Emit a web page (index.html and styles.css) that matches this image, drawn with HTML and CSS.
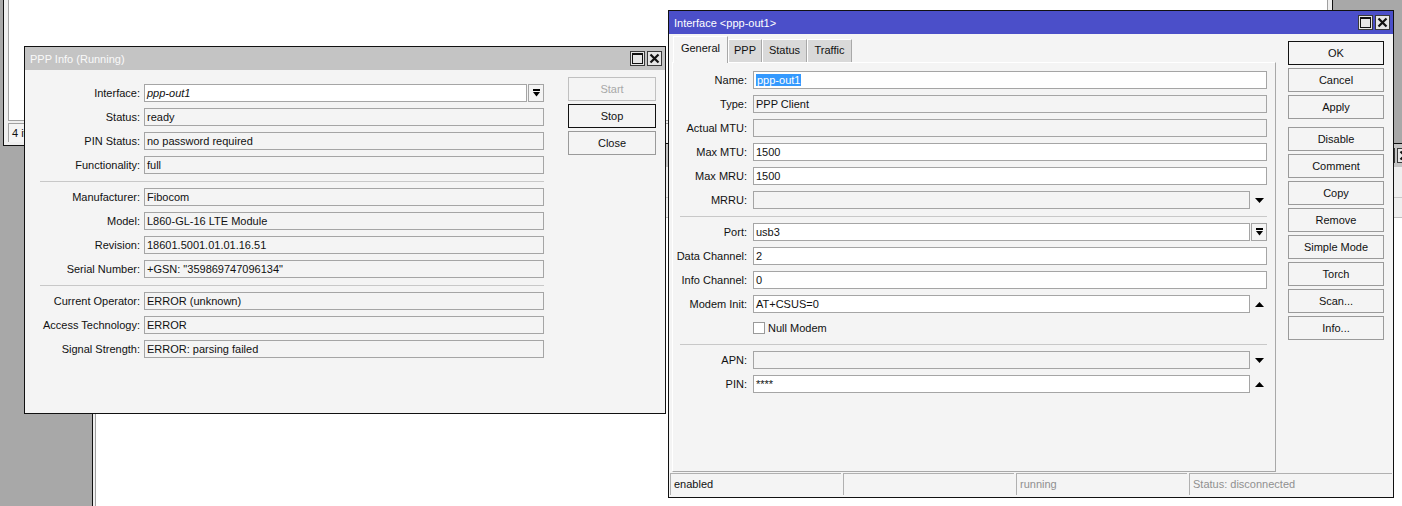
FILE: index.html
```html
<!DOCTYPE html>
<html lang="en">
<head>
  <title>PPP Info - Interface &lt;ppp-out1&gt;</title>
  <meta charset="utf-8">
  <link rel="stylesheet" href="styles.css">
</head>
<body>
  <div id="desktop">

    <!-- windows lying behind -->
    <div class="bgwin" id="bg-top">
      <div class="bglist"></div>
      <div class="bgstatus">4 items</div>
    </div>

    <div class="bgwin" id="bg-low">
      <div class="titlebar">
        <span class="title"></span>
        <span class="tbtn"><svg width="11" height="11" viewBox="0 0 11 11"><rect x="0.5" y="0.5" width="10" height="10" fill="none" stroke="#111"/><rect x="0" y="0" width="11" height="2" fill="#111"/></svg></span>
        <span class="tbtn"><svg width="11" height="11" viewBox="0 0 11 11"><path d="M1.5 1.5 L9.5 9.5 M9.5 1.5 L1.5 9.5" stroke="#111" stroke-width="2.2"/></svg></span>
      </div>
      <div class="bgtools"></div>
      <div class="bghead"></div>
      <div class="bglist"></div>
    </div>

    <!-- PPP Info -->
    <div class="win" id="ppp-info">
      <div class="titlebar">
        <span class="title">PPP Info (Running)</span>
        <span class="tbtn"><svg width="11" height="11" viewBox="0 0 11 11"><rect x="0.5" y="0.5" width="10" height="10" fill="none" stroke="#111"/><rect x="0" y="0" width="11" height="2" fill="#111"/></svg></span>
        <span class="tbtn"><svg width="11" height="11" viewBox="0 0 11 11"><path d="M1.5 1.5 L9.5 9.5 M9.5 1.5 L1.5 9.5" stroke="#111" stroke-width="2.2"/></svg></span>
      </div>
      <div class="body">
        <div class="form">
          <div class="row">
            <span class="lbl">Interface:</span>
            <span class="fld edit"><i>ppp-out1</i></span>
            <span class="dropbtn"><svg width="7" height="8" viewBox="0 0 7 8"><rect x="0" y="0" width="7" height="2" fill="#000"/><polygon points="0,3 7,3 3.5,7.5" fill="#000"/></svg></span>
          </div>
          <div class="row"><span class="lbl">Status:</span><span class="fld">ready</span></div>
          <div class="row"><span class="lbl">PIN Status:</span><span class="fld">no password required</span></div>
          <div class="row"><span class="lbl">Functionality:</span><span class="fld">full</span></div>
          <div class="sep"></div>
          <div class="row"><span class="lbl">Manufacturer:</span><span class="fld">Fibocom</span></div>
          <div class="row"><span class="lbl">Model:</span><span class="fld">L860-GL-16 LTE Module</span></div>
          <div class="row"><span class="lbl">Revision:</span><span class="fld">18601.5001.01.01.16.51</span></div>
          <div class="row"><span class="lbl">Serial Number:</span><span class="fld">+GSN: "359869747096134"</span></div>
          <div class="sep"></div>
          <div class="row"><span class="lbl">Current Operator:</span><span class="fld">ERROR (unknown)</span></div>
          <div class="row"><span class="lbl">Access Technology:</span><span class="fld">ERROR</span></div>
          <div class="row"><span class="lbl">Signal Strength:</span><span class="fld">ERROR: parsing failed</span></div>
        </div>
        <div class="buttons">
          <button class="btn disabled">Start</button>
          <button class="btn default">Stop</button>
          <button class="btn">Close</button>
        </div>
      </div>
    </div>

    <!-- Interface <ppp-out1> -->
    <div class="win" id="iface">
      <div class="titlebar active">
        <span class="title">Interface &lt;ppp-out1&gt;</span>
        <span class="tbtn"><svg width="11" height="11" viewBox="0 0 11 11"><rect x="0.5" y="0.5" width="10" height="10" fill="none" stroke="#111"/><rect x="0" y="0" width="11" height="2" fill="#111"/></svg></span>
        <span class="tbtn"><svg width="11" height="11" viewBox="0 0 11 11"><path d="M1.5 1.5 L9.5 9.5 M9.5 1.5 L1.5 9.5" stroke="#111" stroke-width="2.2"/></svg></span>
      </div>
      <div class="body">
        <div class="main">
          <div class="tabcol">
            <div class="tabs">
              <span class="tab current">General</span>
              <span class="tab" style="width:34px">PPP</span>
              <span class="tab">Status</span>
              <span class="tab">Traffic</span>
            </div>
            <div class="panel">
              <div class="form">
                <div class="row"><span class="lbl">Name:</span><span class="fld edit"><span class="selected">ppp-out1</span></span></div>
                <div class="row"><span class="lbl">Type:</span><span class="fld">PPP Client</span></div>
                <div class="row"><span class="lbl">Actual MTU:</span><span class="fld"></span></div>
                <div class="row"><span class="lbl">Max MTU:</span><span class="fld edit">1500</span></div>
                <div class="row"><span class="lbl">Max MRU:</span><span class="fld edit">1500</span></div>
                <div class="row">
                  <span class="lbl">MRRU:</span><span class="fld"></span>
                  <span class="arrow"><svg width="9" height="5" viewBox="0 0 9 5"><polygon points="0,0 9,0 4.5,5" fill="#000"/></svg></span>
                </div>
                <div class="sep"></div>
                <div class="row">
                  <span class="lbl">Port:</span><span class="fld edit">usb3</span>
                  <span class="dropbtn"><svg width="7" height="8" viewBox="0 0 7 8"><rect x="0" y="0" width="7" height="2" fill="#000"/><polygon points="0,3 7,3 3.5,7.5" fill="#000"/></svg></span>
                </div>
                <div class="row"><span class="lbl">Data Channel:</span><span class="fld edit">2</span></div>
                <div class="row"><span class="lbl">Info Channel:</span><span class="fld edit">0</span></div>
                <div class="row">
                  <span class="lbl">Modem Init:</span><span class="fld edit">AT+CSUS=0</span>
                  <span class="arrow"><svg width="9" height="5" viewBox="0 0 9 5"><polygon points="0,5 9,5 4.5,0" fill="#000"/></svg></span>
                </div>
                <div class="row check"><span class="box"></span>Null Modem</div>
                <div class="sep"></div>
                <div class="row">
                  <span class="lbl">APN:</span><span class="fld"></span>
                  <span class="arrow"><svg width="9" height="5" viewBox="0 0 9 5"><polygon points="0,0 9,0 4.5,5" fill="#000"/></svg></span>
                </div>
                <div class="row">
                  <span class="lbl">PIN:</span><span class="fld edit">****</span>
                  <span class="arrow"><svg width="9" height="5" viewBox="0 0 9 5"><polygon points="0,5 9,5 4.5,0" fill="#000"/></svg></span>
                </div>
              </div>
            </div>
          </div>
          <div class="buttons">
            <button class="btn default">OK</button>
            <button class="btn">Cancel</button>
            <button class="btn">Apply</button>
            <button class="btn spaced">Disable</button>
            <button class="btn">Comment</button>
            <button class="btn">Copy</button>
            <button class="btn">Remove</button>
            <button class="btn">Simple Mode</button>
            <button class="btn">Torch</button>
            <button class="btn">Scan...</button>
            <button class="btn">Info...</button>
          </div>
        </div>
        <div class="statusbar">
          <span class="seg">enabled</span>
          <span class="seg"></span>
          <span class="seg dim">running</span>
          <span class="seg dim">Status: disconnected</span>
        </div>
      </div>
    </div>

  </div>
</body>
</html>
```

FILE: styles.css
```css
* {
  box-sizing: border-box;
}
body {
  margin: 0;
  font-family: "Liberation Sans", Arial, sans-serif;
  font-size: 11px;
  color: #111;
}
#desktop {
  position: relative;
  width: 1402px;
  height: 506px;
  overflow: hidden;
  background-color: #a8a8a8;
}

/* windows sit freely on the desktop */
.bgwin, .win {
  position: absolute;
  display: flex;
  flex-direction: column;
  border: 1px solid #111;
}

/* ---- background windows ---- */
.bgwin {
  background-color: #efefef;
}
#bg-top {
  left: 3px;
  top: -30px;
  width: 1330px;
  height: 176px;
  padding: 4px 4px 3px 4px;
}
#bg-top .bglist {
  flex: 1;
  background: #fff;
  border: 1px solid #a0a0a0;
}
.bgstatus {
  height: 19px;
  margin-top: 2px;
  padding-left: 3px;
  line-height: 18px;
  border-left: 1px solid #a0a0a0;
  border-top: 1px solid #a0a0a0;
  background: #f4f4f4;
}
#bg-low {
  left: 92px;
  top: 143px;
  width: 1324px;
  height: 420px;
}
.bgtools {
  height: 31px;
  margin: 0 2px;
  border-bottom: 1px solid #c8c8c8;
}
.bghead {
  height: 20px;
  margin: 0 2px;
  border-bottom: 1px solid #c0c0c0;
}
#bg-low .bglist {
  flex: 1;
  margin: 0 2px;
  background: #fff;
  border-left: 1px solid #a0a0a0;
}

/* ---- title bars ---- */
.titlebar {
  flex: none;
  height: 23px;
  display: flex;
  align-items: center;
  gap: 2px;
  padding: 0 3px 0 5px;
  background-color: #c4c4c4;
  color: #fafafa;
}
.titlebar.active {
  background-color: #4b4fc9;
  color: #fff;
}
.title {
  flex: 1;
  white-space: nowrap;
}
.tbtn {
  width: 15px;
  height: 15px;
  display: flex;
  align-items: center;
  justify-content: center;
  border: 1px solid #3a3a3a;
  background: #e6e6e6;
}

/* ---- main windows ---- */
.win {
  background-color: #f4f4f4;
}
#ppp-info {
  left: 24px;
  top: 46px;
  width: 642px;
  height: 368px;
}
#ppp-info .body {
  display: flex;
  gap: 24px;
  padding: 7px 9px 0 15px;
}
#iface {
  left: 668px;
  top: 10px;
  width: 726px;
  height: 488px;
}
#iface .body {
  flex: 1;
  display: flex;
  flex-direction: column;
  padding: 2px 0 2px 0;
}

/* ---- form rows ---- */
.form {
  display: flex;
  flex-direction: column;
  gap: 6px;
}
#ppp-info .form {
  width: 504px;
  margin-top: 7px;
}
.row {
  display: flex;
  align-items: center;
  height: 18px;
}
.lbl {
  flex: none;
  text-align: right;
  white-space: nowrap;
}
#ppp-info .lbl {
  width: 100px;
  margin-right: 4px;
}
#iface .lbl {
  width: 74px;
  margin-right: 6px;
}
.fld {
  flex: 1;
  height: 18px;
  padding: 0 2px;
  line-height: 16px;
  white-space: nowrap;
  overflow: hidden;
  border: 1px solid #a5a5a5;
  background-color: #f4f4f4;
}
.fld.edit {
  background-color: #fff;
}
.selected {
  background-color: #3399ff;
  color: #fff;
  padding: 0 1px;
}
.dropbtn {
  flex: none;
  width: 16px;
  height: 18px;
  margin-left: 1px;
  display: flex;
  align-items: center;
  justify-content: center;
  border: 1px solid #a5a5a5;
  background-color: #f4f4f4;
}
.arrow {
  flex: none;
  width: 17px;
  display: flex;
  justify-content: center;
  padding-left: 1px;
}
.sep {
  height: 1px;
  margin-top: 1px;
  background-color: #c8c8c8;
}
#iface .sep {
  margin-left: 7px;
}
.row.check {
  padding-left: 80px;
  gap: 3px;
}
.box {
  width: 12px;
  height: 12px;
  border: 1px solid #9a9a9a;
  background: #fff;
}

/* ---- tabs ---- */
.main {
  flex: 1;
  display: flex;
  gap: 12px;
  padding: 0 9px 0 3px;
}
.tabcol {
  width: 604px;
  display: flex;
  flex-direction: column;
}
.tabs {
  height: 26px;
  display: flex;
  align-items: flex-end;
  padding-left: 1px;
}
.tab {
  width: 45px;
  height: 23px;
  line-height: 21px;
  text-align: center;
  border-top: 1px solid #fff;
  border-left: 1px solid #fff;
  border-right: 1px solid #a8a8a8;
  background-color: #d9d9d9;
}
.tab.current {
  width: 55px;
  height: 27px;
  line-height: 23px;
  margin-bottom: -1px;
  position: relative;
  background-color: #f4f4f4;
}
.panel {
  height: 410px;
  padding: 8px 8px 0 0;
  border: 1px solid;
  border-color: #fff #a8a8a8 #a8a8a8 #fff;
}

/* ---- buttons ---- */
.buttons {
  display: flex;
  flex-direction: column;
  gap: 3px;
}
#iface .buttons {
  margin-top: 5px;
}
.btn {
  width: 88px;
  height: 24px;
  padding: 0;
  font: inherit;
  color: #111;
  border: 1px solid #9a9a9a;
  background-color: #f4f4f4;
}
#iface .btn {
  width: 96px;
}
.btn.default {
  border-color: #111;
}
.btn.disabled {
  color: #a8a8a8;
  border-color: #c0c0c0;
}
.btn.spaced {
  margin-top: 5px;
}

/* ---- status bar ---- */
.statusbar {
  height: 22px;
  margin-top: 1px;
  padding: 0 1px;
  display: grid;
  grid-template-columns: 171px 171px 171px 1fr;
  gap: 2px;
}
.seg {
  padding-left: 3px;
  line-height: 20px;
  border-top: 1px solid #b0b0b0;
  border-left: 1px solid #b0b0b0;
}
.seg.dim {
  color: #909090;
}
```
